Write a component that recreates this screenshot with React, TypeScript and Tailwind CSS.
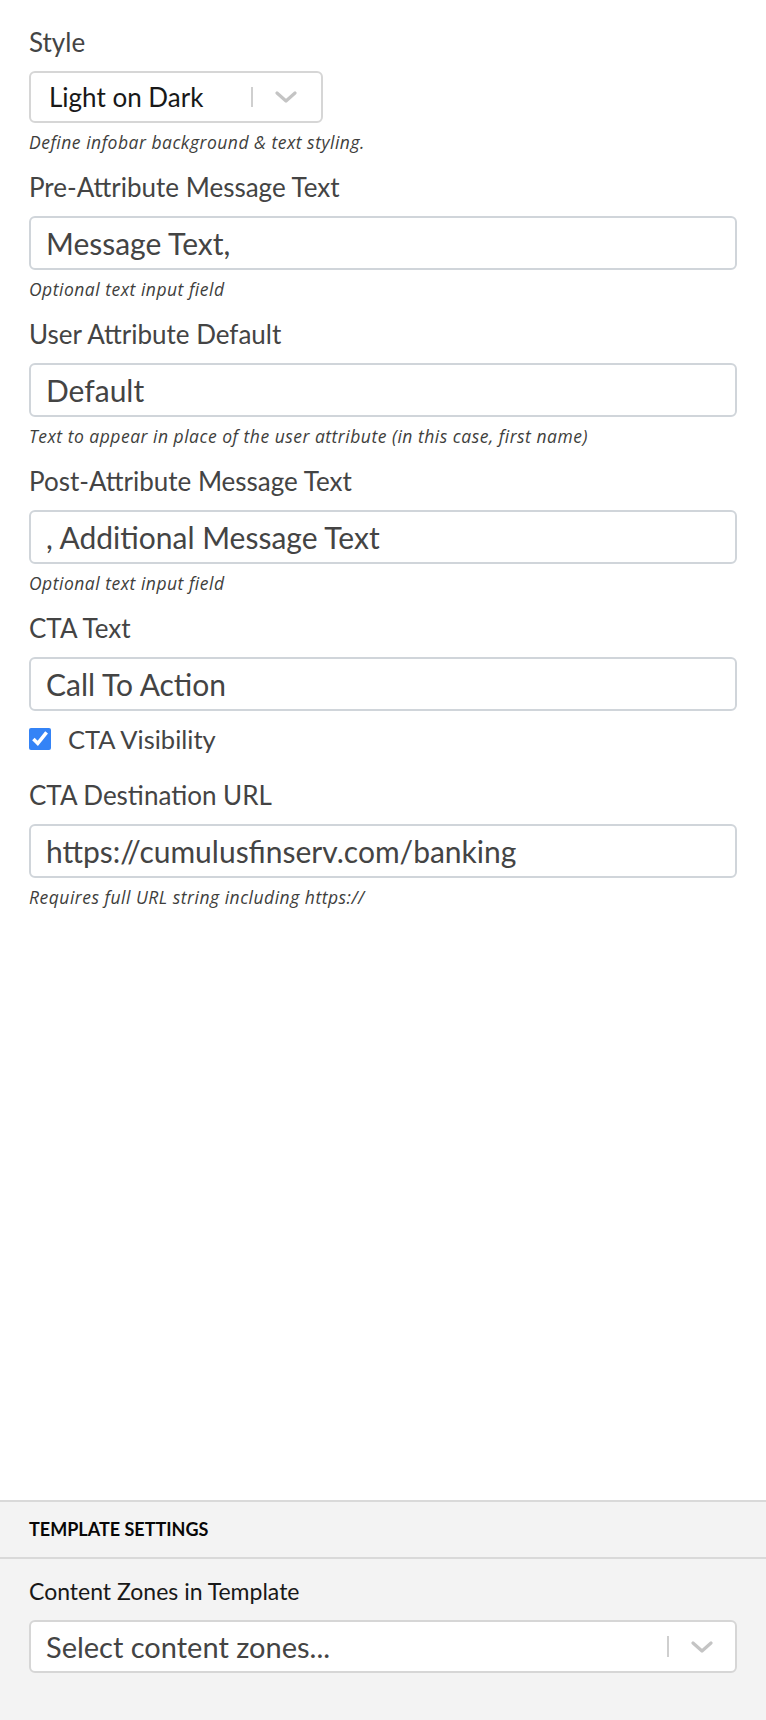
import React from "react";

const font = { fontFamily: "Lato, 'Open Sans', sans-serif" };

function Chevron() {
  return (
    <svg width="22" height="12" viewBox="0 0 22 12" fill="none">
      <path d="M2 2 L11 10 L20 2" stroke="#c4c4c4" strokeWidth="3.2" strokeLinecap="round" strokeLinejoin="round" />
    </svg>
  );
}

function Label({ children }: { children: React.ReactNode }) {
  return <div className="h-[30px] leading-[30px] text-[26px] text-[#444444]">{children}</div>;
}

function Help({ children }: { children: React.ReactNode }) {
  return (
    <div className="mt-[9px] h-[20px] leading-[20px] text-[17.5px] tracking-[0.5px] italic text-[#3e3e3c] font-['Open_Sans',sans-serif]">
      {children}
    </div>
  );
}

function TextInput({ value }: { value: string }) {
  return (
    <div className="mt-[14px] h-[54px] rounded-[6px] border-2 border-[#d0d5da] bg-white flex items-center px-[15px] text-[30px] text-[#444444]">
      {value}
    </div>
  );
}

function Field({ label, value, help }: { label: string; value: string; help: string }) {
  return (
    <div className="mt-[20px]">
      <Label>{label}</Label>
      <TextInput value={value} />
      <Help>{help}</Help>
    </div>
  );
}

export default function App() {
  return (
    <div style={font} className="h-[1720px] w-[766px] flex flex-col bg-white">
      <div className="flex-1 px-[29px] pt-[27px]">
        <div>
          <Label>Style</Label>
          <div className="mt-[14px] h-[52px] w-[294px] rounded-[6px] border-2 border-[#d6d6d6] bg-white flex items-center pl-[18px] pr-[24px] text-[26px] text-[#181818]">
            <span className="flex-1">Light on Dark</span>
            <span className="w-[2px] h-[20px] bg-[#cfcfcf] mr-[22px]" />
            <Chevron />
          </div>
          <Help>Define infobar background &amp; text styling.</Help>
        </div>
        <Field label="Pre-Attribute Message Text" value="Message Text," help="Optional text input field" />
        <Field
          label="User Attribute Default"
          value="Default"
          help="Text to appear in place of the user attribute (in this case, first name)"
        />
        <Field label="Post-Attribute Message Text" value=", Additional Message Text" help="Optional text input field" />
        <div className="mt-[20px]">
          <Label>CTA Text</Label>
          <TextInput value="Call To Action" />
        </div>
        <label className="mt-[13px] h-[30px] flex items-center gap-[17px] text-[25.5px] text-[#444444]">
          <input type="checkbox" defaultChecked className="w-[22px] h-[22px] m-0 accent-[#3483f6]" />
          <span>CTA Visibility</span>
        </label>
        <div className="mt-[26px]">
          <Label>CTA Destination URL</Label>
          <TextInput value="https://cumulusfinserv.com/banking" />
          <Help>Requires full URL string including https://</Help>
        </div>
      </div>
      <div className="h-[220px] bg-[#f3f3f3] border-t-2 border-[#d9d9d9]">
        <div className="h-[57px] border-b-2 border-[#d9d9d9] px-[29px] flex items-center text-[18px] font-bold text-[#080707]">
          TEMPLATE SETTINGS
        </div>
        <div className="px-[29px] pt-[18px]">
          <div className="h-[28px] leading-[28px] text-[23px] text-[#181818]">Content Zones in Template</div>
          <div className="mt-[15px] h-[53px] rounded-[6px] border-2 border-[#d6d6d6] bg-white flex items-center pl-[15px] pr-[22px] text-[29px] text-[#444444]">
            <span className="flex-1">Select content zones...</span>
            <span className="w-[2px] h-[21px] bg-[#cfcfcf] mr-[22px]" />
            <Chevron />
          </div>
        </div>
      </div>
    </div>
  );
}
